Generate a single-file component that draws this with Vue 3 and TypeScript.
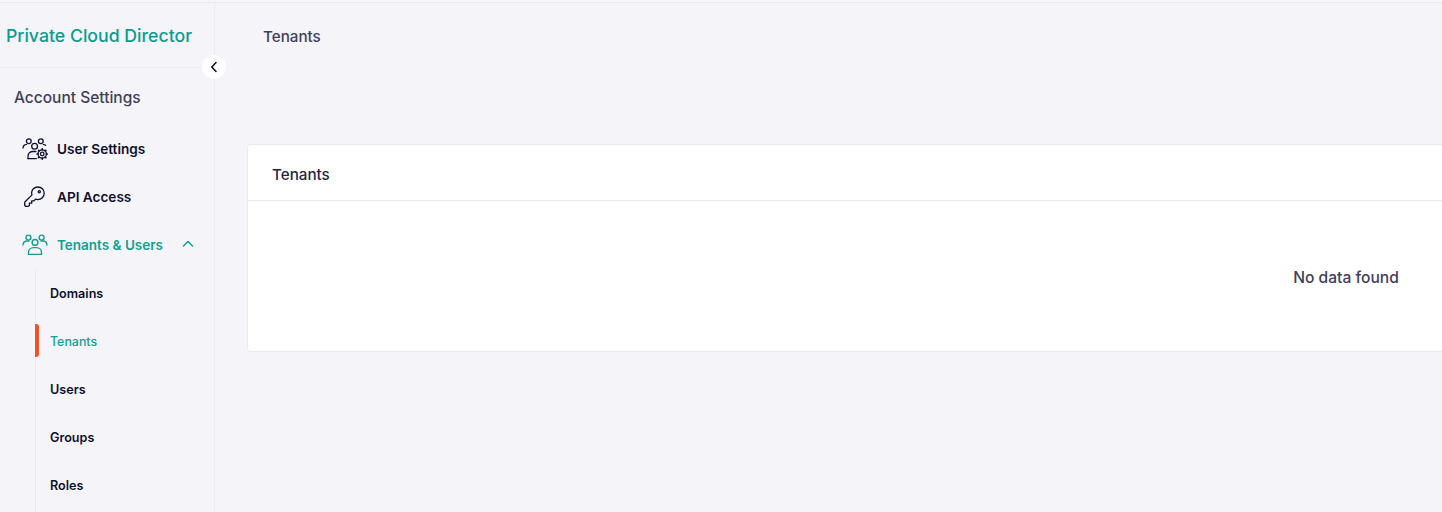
<script setup lang="ts">
const subItems: { label: string; active?: boolean }[] = [
  { label: 'Domains' },
  { label: 'Tenants', active: true },
  { label: 'Users' },
  { label: 'Groups' },
  { label: 'Roles' },
]
</script>

<template>
  <div class="page">
    <aside class="sidebar">
      <div class="brand">Private Cloud Director</div>
      <button class="collapse" aria-label="Collapse">
        <svg width="14" height="14" viewBox="0 0 14 14" fill="none" stroke="#10102e" stroke-width="1.6" stroke-linecap="round" stroke-linejoin="round"><path d="M9 2.500 4.800 7 9 11.500" /></svg>
      </button>
      <div class="section">Account Settings</div>
      <nav class="nav">
        <a class="item">
          <svg class="icon" viewBox="0 0 26 22" fill="none" stroke="#10102e" stroke-width="1.300" stroke-linecap="round" stroke-linejoin="round">
            <circle cx="6.800" cy="3.200" r="2.400" />
            <circle cx="18.800" cy="3.200" r="2.400" />
            <circle cx="12.600" cy="8.200" r="2.900" />
            <path d="M1 10c.1-2.200 1.500-3.500 3.600-3.700" />
            <path d="M21.300 6.300c1 .1 1.700.4 2.300 1" />
            <path d="M6 20.600v-2.400c0-2.800 2.200-4.700 4.900-4.700h3" />
            <path d="M6 20.600h8.300" />
            <circle cx="20.200" cy="16" r="1.800" />
            <circle cx="20.200" cy="16" r="4.200" />
            <path d="M20.200 10.800v1M20.200 20.200v1M15 16h1M24.400 16h1M16.500 12.300l.7.7M23.200 19l.7.700M16.500 19.700l.7-.7M23.200 13l.7-.7" stroke-width="1.600" />
          </svg>
          <span>User Settings</span>
        </a>
        <a class="item">
          <svg class="icon" viewBox="0 0 26 22" fill="none" stroke="#10102e" stroke-width="1.300" stroke-linecap="round" stroke-linejoin="round">
            <path d="M15.800 1c3.700 0 6.400 2.700 6.400 6.300 0 3.500-2.800 6.300-6.400 6.300-.9 0-1.600-.1-2.300-.4l-1.600 1.700H9.700v2.300H7.400v2.300l-1.200.8H3.600l-.9-1v-2.700l.4-.9 6.900-6.800c-.3-.7-.4-1.300-.4-2.100C9.600 3.700 12.200 1 15.800 1z" />
            <circle cx="17.300" cy="5.700" r="1.100" />
          </svg>
          <span>API Access</span>
        </a>
        <a class="item open">
          <svg class="icon" viewBox="0 0 26 22" fill="none" stroke="#12a093" stroke-width="1.400" stroke-linecap="round" stroke-linejoin="round">
            <circle cx="6.400" cy="3.600" r="2.500" />
            <circle cx="19.600" cy="3.600" r="2.500" />
            <circle cx="13" cy="8.400" r="2.900" />
            <path d="M1 11c.2-2.400 1.700-4 4-4h2" />
            <path d="M25 11c-.2-2.400-1.700-4-4-4h-2" />
            <path d="M6.500 20.400v-2c0-2.900 2.200-4.800 5-4.800h3c2.800 0 5 1.900 5 4.800v2z" />
          </svg>
          <span>Tenants &amp; Users</span>
          <svg class="chevron" width="14" height="14" viewBox="0 0 14 14" fill="none" stroke="#12a093" stroke-width="1.500" stroke-linecap="round" stroke-linejoin="round"><path d="M2.500 9 7 4.500 11.500 9" /></svg>
        </a>
        <div class="sub">
          <a v-for="s in subItems" :key="s.label" class="sub-item" :class="{ active: s.active }">{{ s.label }}</a>
        </div>
      </nav>
    </aside>
    <main class="main">
      <h1 class="title">Tenants</h1>
      <section class="card">
        <header class="card-head">Tenants</header>
        <div class="empty">No data found</div>
      </section>
    </main>
  </div>
</template>

<style>
html, body { margin: 0; height: 100%; overflow: hidden; background: #f4f4f9; }
</style>

<style scoped>
.page {
  display: flex;
  width: 1442px;
  height: 510px;
  margin-top: 2px;
  box-sizing: border-box;
  overflow: hidden;
  background: #f4f4f9;
  border-top: 1px solid #eaeaf0;
  font-family: Inter, "Noto Sans", sans-serif;
}
.sidebar {
  position: relative;
  flex: 0 0 215px;
  box-sizing: border-box;
  border-right: 1px solid #ebebf2;
}
.brand {
  height: 65px;
  box-sizing: border-box;
  padding: 21px 0 0 6px;
  border-bottom: 1px solid #ebebf2;
  color: #0b9c90;
  font-size: 17.700px;
  line-height: 24px;
  font-weight: 500;
  white-space: nowrap;
}
.collapse {
  position: absolute;
  top: 52px;
  left: 202px;
  width: 24px;
  height: 24px;
  padding: 0;
  display: flex;
  align-items: center;
  justify-content: center;
  border: 0;
  border-radius: 50%;
  background: #fff;
}
.section {
  padding: 20px 0 0 14px;
  color: #40405a;
  font-size: 15.500px;
  line-height: 20px;
  font-weight: 500;
}
.nav {
  margin-top: 17px;
  display: flex;
  flex-direction: column;
}
.item {
  height: 48px;
  display: flex;
  align-items: center;
  padding-left: 22px;
  color: #10102e;
  font-size: 13.600px;
  font-weight: 600;
}
.item.open { color: #12a093; font-size: 13.500px; }
.icon { width: 26px; height: 22px; margin-right: 9px; flex: none; }
.chevron { margin-left: 18px; margin-top: -3px; }
.sub {
  margin-left: 35px;
  padding-bottom: 12px;
  border-left: 1px solid #e9e9f0;
  display: flex;
  flex-direction: column;
}
.sub-item {
  position: relative;
  height: 48px;
  display: flex;
  align-items: center;
  padding-left: 14px;
  color: #10102e;
  font-size: 12.600px;
  font-weight: 600;
}
.sub-item.active { color: #12a093; font-weight: 500; font-size: 12.400px; }
.sub-item.active::before {
  content: "";
  position: absolute;
  left: -1px;
  top: 7px;
  width: 4px;
  height: 33px;
  border-radius: 0 3px 3px 0;
  background: #f4502a;
}
.main {
  flex: 1;
  min-width: 0;
  padding: 0 0 0 32px;
}
.title {
  margin: 0;
  padding: 23px 0 0 16px;
  color: #40405a;
  font-size: 15.200px;
  line-height: 22px;
  font-weight: 500;
}
.card {
  margin-top: 96px;
  width: 2198px;
  box-sizing: border-box;
  height: 208px;
  background: #fff;
  border: 1px solid #e9e9f0;
  border-radius: 4px;
}
.card-head {
  height: 56px;
  box-sizing: border-box;
  padding: 18.500px 0 0 24px;
  border-bottom: 1px solid #e9e9f0;
  color: #25253f;
  font-size: 15.200px;
  line-height: 22px;
  font-weight: 500;
}
.empty {
  padding-top: 66px;
  text-align: center;
  color: #40405a;
  font-size: 15.600px;
  line-height: 22px;
  font-weight: 500;
}
</style>
